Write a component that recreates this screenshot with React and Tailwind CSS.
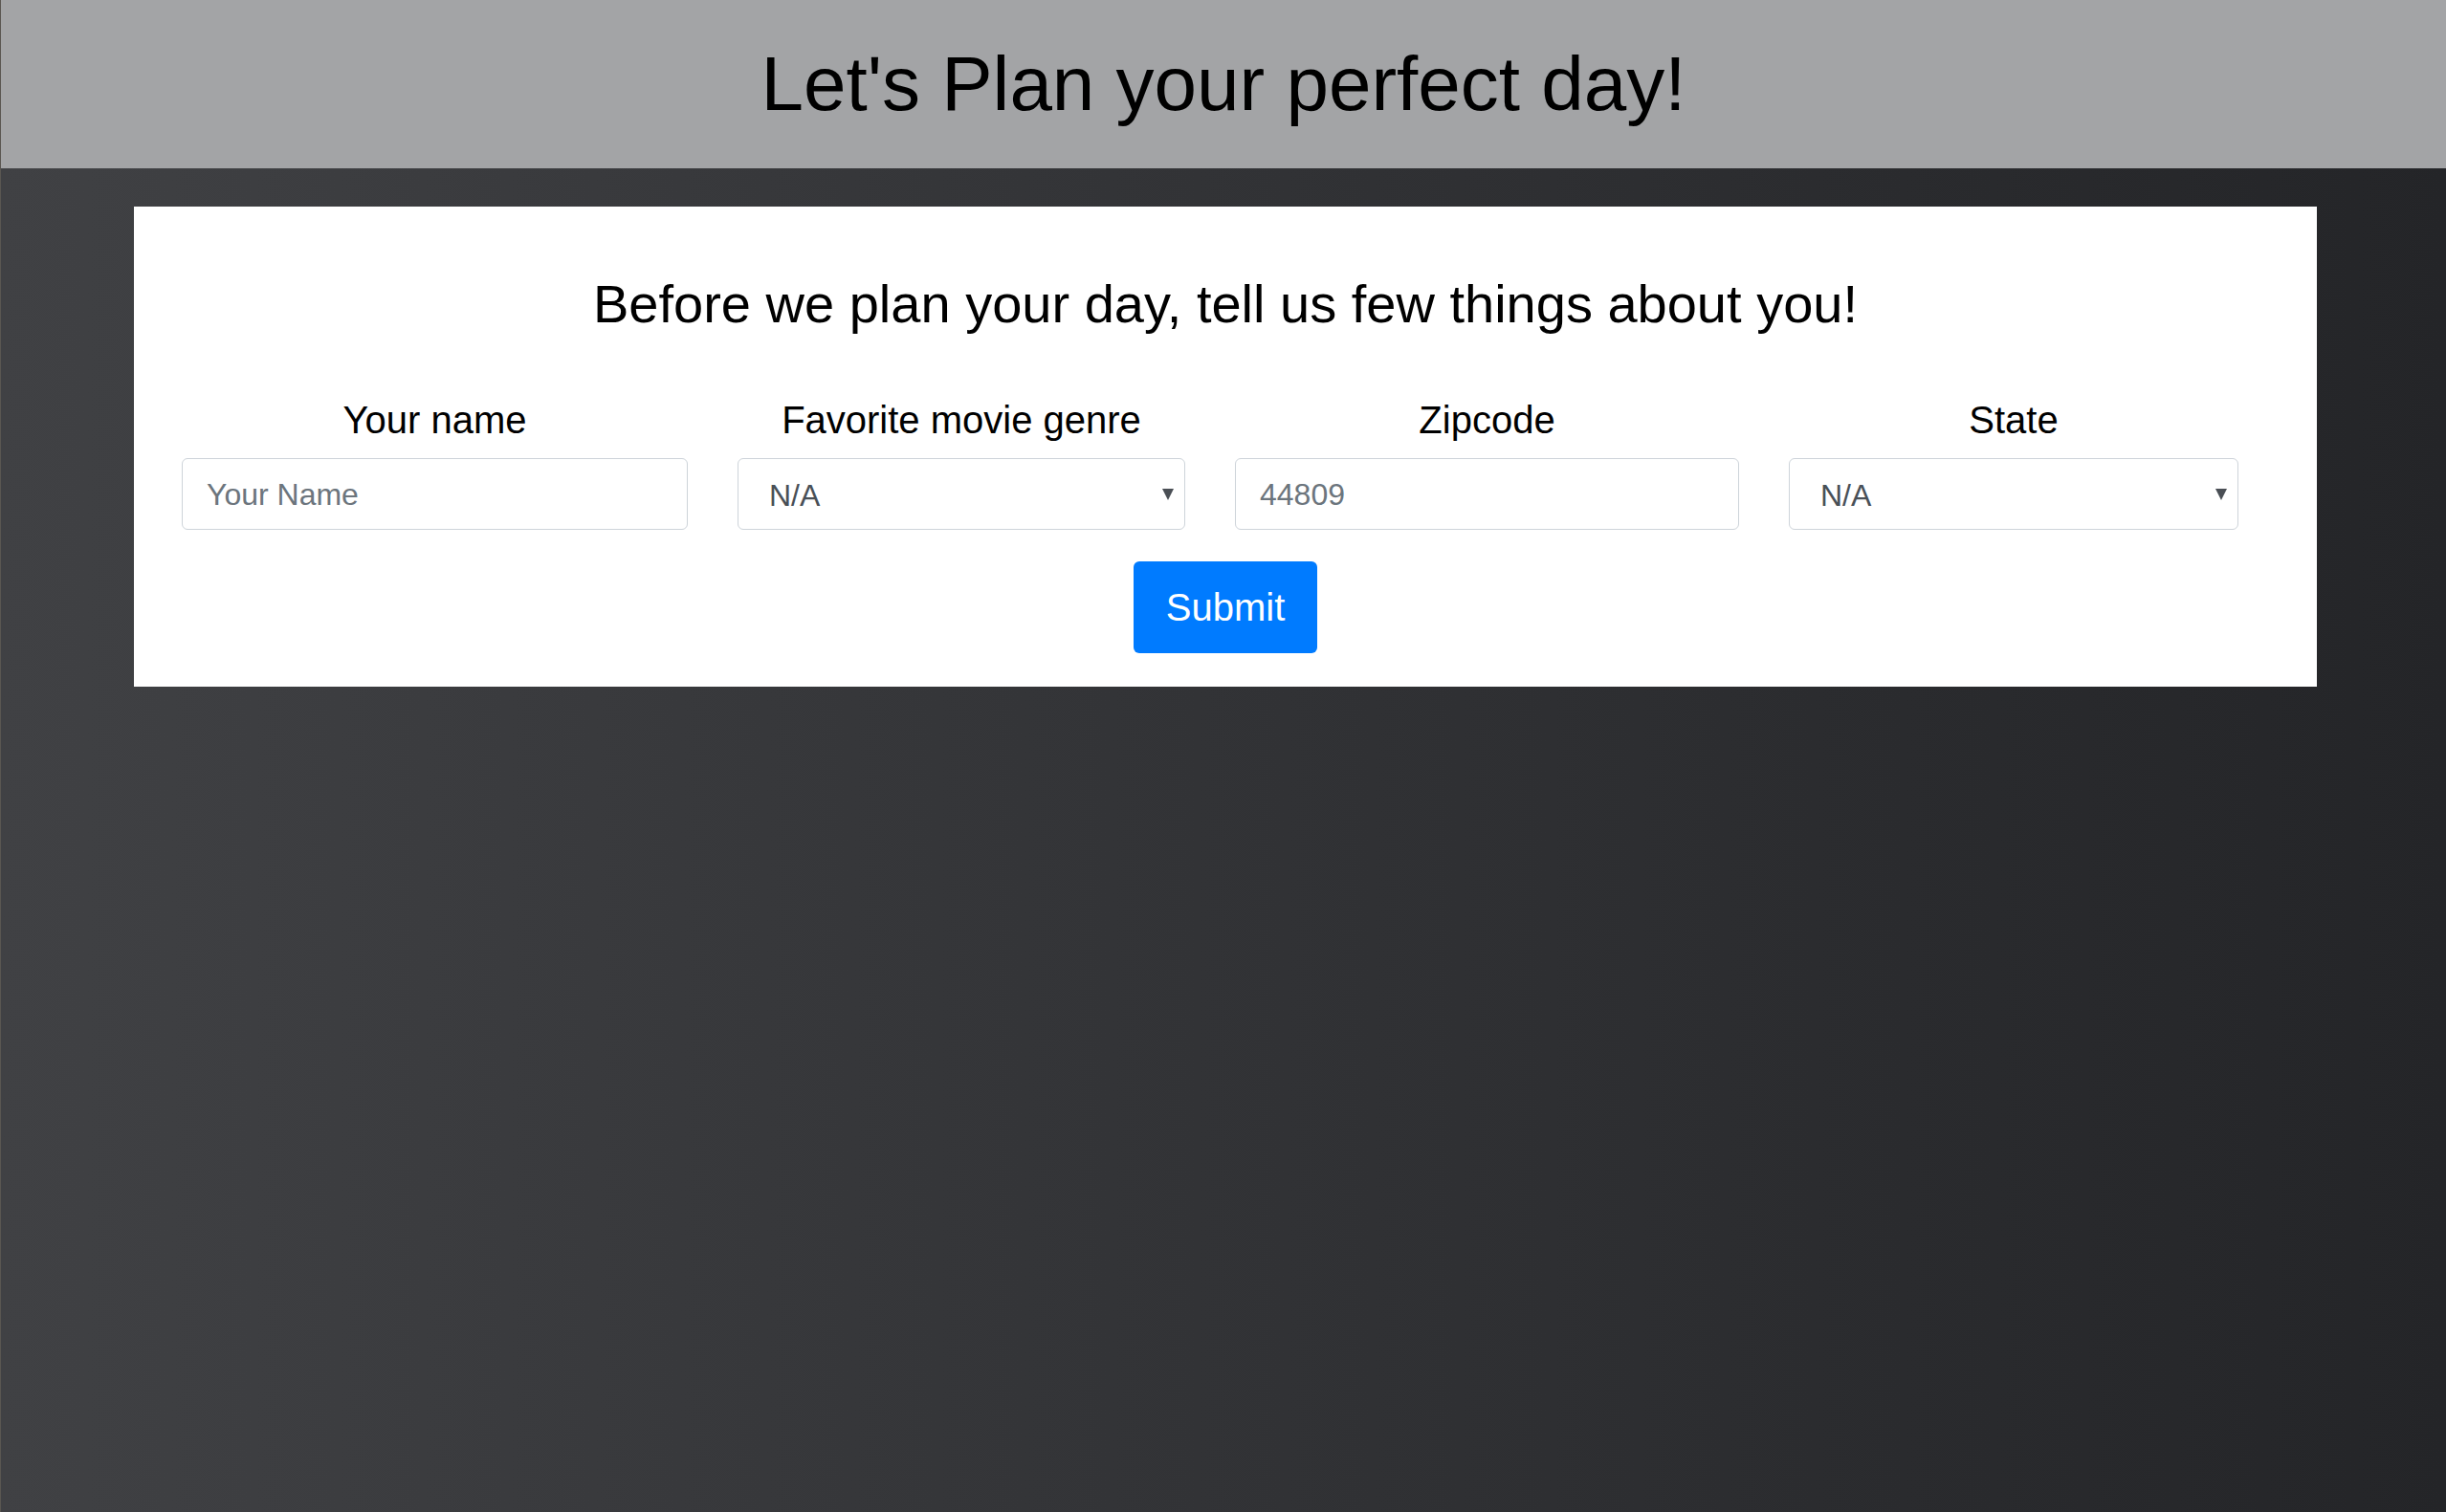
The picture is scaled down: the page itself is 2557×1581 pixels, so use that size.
import React from "react";

const font = { fontFamily: '"Liberation Sans", Arial, sans-serif' };

function Caret() {
  return (
    <svg
      className="pointer-events-none absolute right-[12px] top-1/2 -translate-y-1/2"
      width="12"
      height="12"
      viewBox="0 0 12 12"
    >
      <polygon points="0,0 12,0 6,12" fill="#4a4f55" />
    </svg>
  );
}

function Field({ label, width, children }) {
  return (
    <div className={`flex flex-col items-center ${width}`}>
      <label className="text-[40px] leading-none text-black">{label}</label>
      <div className="relative mt-[20px] w-full">{children}</div>
    </div>
  );
}

function TextInput({ placeholder }) {
  return (
    <input
      type="text"
      placeholder={placeholder}
      className="block h-[75px] w-full rounded-[6px] border border-[#ced4da] bg-white pl-[25px] pt-[2px] text-[32px] text-[#495057] outline-none placeholder:text-[#6c757d]"
      style={font}
    />
  );
}

function Select() {
  return (
    <>
      <select
        className="block h-[75px] w-full appearance-none rounded-[6px] border border-[#ced4da] bg-white pl-[32px] pt-[2px] text-[32px] text-[#495057] outline-none"
        style={font}
        defaultValue="N/A"
      >
        <option>N/A</option>
      </select>
      <Caret />
    </>
  );
}

export default function App() {
  return (
    <div
      className="min-h-screen border-l border-[#5a5651] bg-linear-to-r from-[#404144] to-[#242528]"
      style={font}
    >
      <header className="flex h-[176px] items-center justify-center bg-[#a3a4a6]">
        <h1 className="text-[80px] leading-none text-black">
          Let's Plan your perfect day!
        </h1>
      </header>

      <div className="ml-[139px] mt-[40px] w-[2282px] bg-white pb-[35px] pt-[74px]">
        <h2 className="text-center text-[56px] leading-none text-black">
          Before we plan your day, tell us few things about you!
        </h2>

        <div className="mt-[73px] flex gap-[52px] pl-[50px]">
          <Field label="Your name" width="w-[529px]">
            <TextInput placeholder="Your Name" />
          </Field>
          <Field label="Favorite movie genre" width="w-[468px]">
            <Select />
          </Field>
          <Field label="Zipcode" width="w-[527px]">
            <TextInput placeholder="44809" />
          </Field>
          <Field label="State" width="w-[470px]">
            <Select />
          </Field>
        </div>

        <div className="mt-[33px] flex justify-center">
          <button className="h-[96px] w-[192px] rounded-[6px] bg-[#007bff] text-[40px] text-white">
            Submit
          </button>
        </div>
      </div>
    </div>
  );
}
